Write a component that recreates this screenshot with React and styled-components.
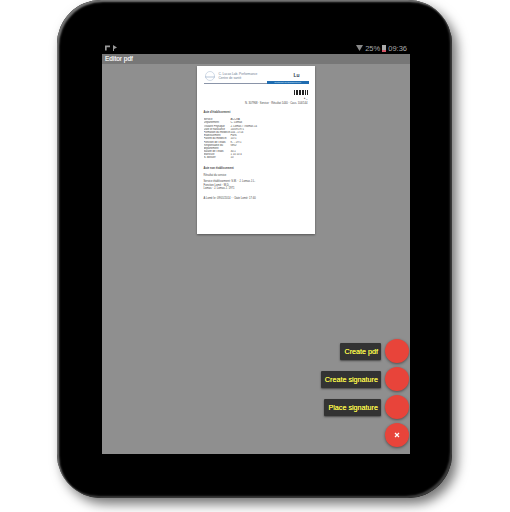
import React from "react";
import styled, { createGlobalStyle } from "styled-components";

const Global = createGlobalStyle`
  html, body { margin: 0; padding: 0; background: #fff; }
  body { width: 510px; height: 512px; overflow: hidden; font-family: "Liberation Sans", Arial, sans-serif; }
`;
const Stage = styled.div`
  width: 510px; height: 512px; padding: 0 58px 0 57px; box-sizing: border-box;
`;
const Device = styled.div`
  width: 395px; height: 498px; box-sizing: border-box;
  background: #000; border-radius: 44px;
  box-shadow: inset 2px 2px 2px #777, inset -2px -2px 2px #3c3c3c, 5px 6px 12px rgba(0,0,0,.55);
  padding: 42px 42px 44px 45px;
`;
const Screen = styled.div`
  width: 308px; height: 412px; display: flex; flex-direction: column; background: #8f8f8f;
`;
const StatusBar = styled.div`
  height: 12px; background: #000; color: #aaa; display: flex; align-items: center;
  justify-content: space-between; padding: 0 3px 0 3px; font-size: 7.5px;
`;
const StatusGroup = styled.div`display: flex; align-items: center; gap: 2px;`;
const TitleBar = styled.div`
  height: 10px; background: #777; color: #e6e6e6; font-size: 6.5px; line-height: 10px; padding-left: 3px;
  text-shadow: 0 0 .5px #fff;
`;
const Canvas = styled.div`
  flex: 1; position: relative; padding-top: 2px; display: flex; justify-content: center;
`;
const Page = styled.div`
  width: 118px; height: 168px; box-sizing: border-box; background: #fff; color: #444;
  margin-left: -1px; padding: 4px 7px; box-shadow: 0 1px 2px rgba(0,0,0,.4); font-size: 2.7px; line-height: 3.4px;
  overflow: hidden; white-space: nowrap;
`;
const Letterhead = styled.div`display: flex; align-items: center; gap: 3px; height: 11px;`;
const Org = styled.div`flex: 1; color: #6d7d92; font-size: 3.2px; line-height: 4px;`;
const Brand = styled.div`color: #345; font-size: 5px; font-weight: bold; text-align: right; padding-right: 8px;`;
const Rule = styled.div`display: flex; align-items: flex-end; height: 3px; margin-right: -1px;`;
const RuleLine = styled.div`flex: 1; height: 1px; background: #8a94a8;`;
const RuleBar = styled.div`
  width: 42px; height: 3px; background: #1f6cb0; color: #dfeeff; font-size: 2.4px; line-height: 3px; text-align: center;
`;
const CodeBlock = styled.div`display: flex; flex-direction: column; align-items: flex-end; margin-top: 6px;`;
const Small = styled.div`text-align: ${p => p.$right ? "right" : "left"}; margin-top: ${p => p.$gap || 0}px; font-weight: ${p => p.$bold ? "bold" : "normal"};`;
const Row = styled.div`display: grid; grid-template-columns: 27px 1fr; height: 3.2px; overflow: hidden;`;
const Fabs = styled.div`
  position: absolute; right: 1px; bottom: 7px; display: grid; grid-template-columns: auto 24px; gap: 4px 4px;
  justify-items: end; align-items: center;
`;
const Label = styled.div`
  height: 17px; line-height: 17px; padding: 0 3px 0 4px; background: #333; color: #f3f04a; border-radius: 1px;
  font-size: 7.2px; box-shadow: 0 1px 2px rgba(0,0,0,.5); white-space: nowrap; text-shadow: 0 0 .3px #f3f04a;
`;
const Fab = styled.div`
  width: 24px; height: 24px; border-radius: 50%; background: #e8443a; color: #fff; display: flex;
  align-items: center; justify-content: center; box-shadow: 0 1px 3px rgba(0,0,0,.45);
`;
const Spacer = styled.div``;

const rows = [
  ["Service", "ACCRA"], ["Département", "C. Lomax"], ["Titulaire Physique", "J. Lomas / Thomas  14"],
  ["Date of naissance", "14/09/1971"], ["Formation du médecin", "104 - 1714"], ["Etablissement", "Paris"],
  ["Patient du médecin", "1071"], ["Fonction de l'établ.", "K. - 1971"], ["Responsable du", "GRD"],
  ["département", ""], ["Salaire de l'établ.", "30.1"], ["Matricule", "  1 10   10   4"], ["N. dossier", "  10"],
];

export default function App() {
  return (
    <>
      <Global />
      <Stage>
        <Device>
          <Screen>
            <StatusBar>
              <StatusGroup>
                <svg width="5" height="6" viewBox="0 0 6 6"><path d="M0 0h6v2H2v4H0z" fill="#999" /></svg>
                <svg width="5" height="6" viewBox="0 0 5 6"><path d="M1 0l4 2.5L2 4v2H1z" fill="#999" /></svg>
              </StatusGroup>
              <StatusGroup>
                <svg width="7" height="6" viewBox="0 0 7 6"><path d="M0 0h7L3.5 6z" fill="#888" /></svg>
                <span>25%</span>
                <svg width="4" height="7" viewBox="0 0 4 7"><rect width="4" height="7" fill="#aaa" /><rect y="5" width="4" height="2" fill="#d45a6a" /></svg>
                <span>09:36</span>
              </StatusGroup>
            </StatusBar>
            <TitleBar>Editor pdf</TitleBar>
            <Canvas>
              <Page>
                <Letterhead>
                  <svg width="12" height="10" viewBox="0 0 12 10"><circle cx="6" cy="5" r="4.5" fill="none" stroke="#b4c4d6" strokeWidth="0.6" /><path d="M1 6h10" stroke="#8ba2c0" strokeWidth="0.6" /></svg>
                  <Org>C. Lucas Lab. Performance<br />Centre de santé</Org>
                  <Brand>Lu</Brand>
                </Letterhead>
                <Rule><RuleLine /><RuleBar>Certificat d'établissement</RuleBar></Rule>
                <CodeBlock>
                  <svg width="14" height="5" viewBox="0 0 14 6" preserveAspectRatio="none">
                    {[0, 2, 3, 5, 6, 8, 9, 11, 13].map(x => <rect key={x} x={x} width="1" height="6" fill="#222" />)}
                  </svg>
                  <Small $gap={2}>● _</Small>
                </CodeBlock>
                <Small $right $gap={2}>N. 307968 · Service · Résultat 1440 · Cass. 104/144</Small>
                <Small $bold $gap={5}>Acte d'établissement</Small>
                <Small $gap={4} />
                {rows.map(([a, b], i) => <Row key={i}><span>{a}</span><span>{b}</span></Row>)}
                <Small $bold $gap={7}>Acte non établissement</Small>
                <Small $gap={4}>Résultat du service</Small>
                <Small $gap={3}>Service établissement:  S.M. · J. Lomas J.L.</Small>
                <Small>Fonction Lomé · M.D.</Small>
                <Small>Lomas · J. Lomas J. 1971</Small>
                <Small $gap={6}>A Lomé le: 09/01/2014 · · Date Lomé: 17:40</Small>
              </Page>
              <Fabs>
                <Label>Create pdf</Label><Fab />
                <Label>Create signature</Label><Fab />
                <Label>Place signature</Label><Fab />
                <Spacer />
                <Fab>
                  <svg width="6" height="6" viewBox="0 0 6 6"><path d="M1 1l4 4M5 1L1 5" stroke="#fff" strokeWidth="1.2" /></svg>
                </Fab>
              </Fabs>
            </Canvas>
          </Screen>
        </Device>
      </Stage>
    </>
  );
}
